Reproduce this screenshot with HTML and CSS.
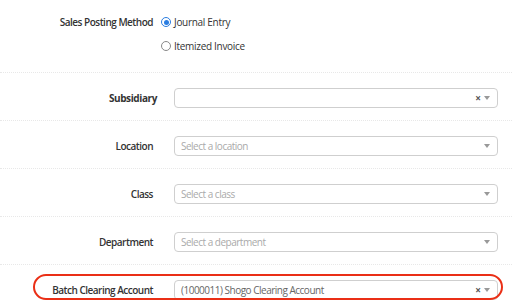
FILE: index.html
```html
<!DOCTYPE html>
<html>
<head>
<meta charset="utf-8">
<link rel="stylesheet" href="styles.css">
</head>
<body>
<div class="form">
  <div class="row row-radio">
    <div class="label">Sales Posting Method</div>
    <div class="radios">
      <label class="opt"><span class="radio checked"></span>Journal Entry</label>
      <label class="opt"><span class="radio"></span>Itemized Invoice</label>
    </div>
  </div>
  <div class="row">
    <div class="label strong">Subsidiary</div>
    <div class="select"><span class="val"></span><span class="clear">×</span><span class="arrow"></span></div>
  </div>
  <div class="row">
    <div class="label">Location</div>
    <div class="select"><span class="val ph">Select a location</span><span class="arrow"></span></div>
  </div>
  <div class="row">
    <div class="label">Class</div>
    <div class="select"><span class="val ph">Select a class</span><span class="arrow"></span></div>
  </div>
  <div class="row">
    <div class="label">Department</div>
    <div class="select"><span class="val ph">Select a department</span><span class="arrow"></span></div>
  </div>
  <div class="row last">
    <div class="label">Batch Clearing Account</div>
    <div class="select"><span class="val">(1000011) Shogo Clearing Account</span><span class="clear">×</span><span class="arrow"></span></div>
    <div class="highlight"></div>
  </div>
</div>
</body>
</html>
```
FILE: styles.css
```css
html, body {
  margin: 0;
  padding: 0;
  background: #fff;
}
body {
  font-family: "Open Sans", "Liberation Sans", sans-serif;
  font-size: 10px;
  color: #333;
  width: 512px;
  height: 304px;
  overflow: hidden;
}
.form {
  display: flex;
  flex-direction: column;
}
.row {
  position: relative;
  display: flex;
  align-items: center;
  padding-top: 3px;
  border-top: 1px dotted #e8e8e8;
  box-sizing: border-box;
  height: 48px;
}
.row-radio {
  border-top: none;
  height: 72px;
  padding-top: 10px;
  align-items: flex-start;
}
.label {
  width: 153px;
  text-align: right;
  font-weight: 600;
  font-size: 10px;
  letter-spacing: -0.5px;
  color: #333;
  flex: none;
  line-height: 20px;
}
.label.strong {
  width: 157px;
  margin-right: -4px;
  font-weight: 700;
  letter-spacing: -0.4px;
}
.row-radio .label { line-height: 24px; }
.radios {
  display: flex;
  flex-direction: column;
  margin-left: 8px;
}
.opt {
  display: flex;
  align-items: center;
  height: 24px;
  font-size: 10px;
  letter-spacing: -0.3px;
  color: #333;
}
.radio {
  width: 8px;
  height: 8px;
  border: 1px solid #888;
  border-radius: 50%;
  margin-right: 3px;
  box-sizing: content-box;
  position: relative;
  background: #fff;
}
.radio.checked {
  border-color: #2a7de1;
}
.radio.checked::after {
  content: "";
  position: absolute;
  left: 1.5px;
  top: 1.5px;
  width: 5px;
  height: 5px;
  border-radius: 50%;
  background: #2a7de1;
}
.select {
  margin-left: 21px;
  width: 324px;
  height: 20px;
  box-sizing: border-box;
  border: 1px solid #cfcfcf;
  border-radius: 4px;
  display: flex;
  align-items: center;
  padding: 0 6px 0 6px;
  background: #fff;
  position: relative;
  z-index: 1;
}
.val {
  flex: 1;
  color: #666;
  font-size: 10px;
  letter-spacing: -0.5px;
  white-space: nowrap;
  overflow: hidden;
}
.val.ph { color: #aaa; }
.clear {
  font-size: 10px;
  font-weight: 700;
  color: #555;
  margin-right: 3px;
  line-height: 1;
}
.arrow {
  width: 0;
  height: 0;
  border-left: 3px solid transparent;
  border-right: 3px solid transparent;
  border-top: 4px solid #999;
  margin-right: 1px;
}
.highlight {
  position: absolute;
  left: 33px;
  right: 9px;
  top: 9px;
  height: 26px;
  box-sizing: border-box;
  border: 2px solid #ea2f16;
  border-radius: 14px;
  z-index: 2;
  pointer-events: none;
}
```
